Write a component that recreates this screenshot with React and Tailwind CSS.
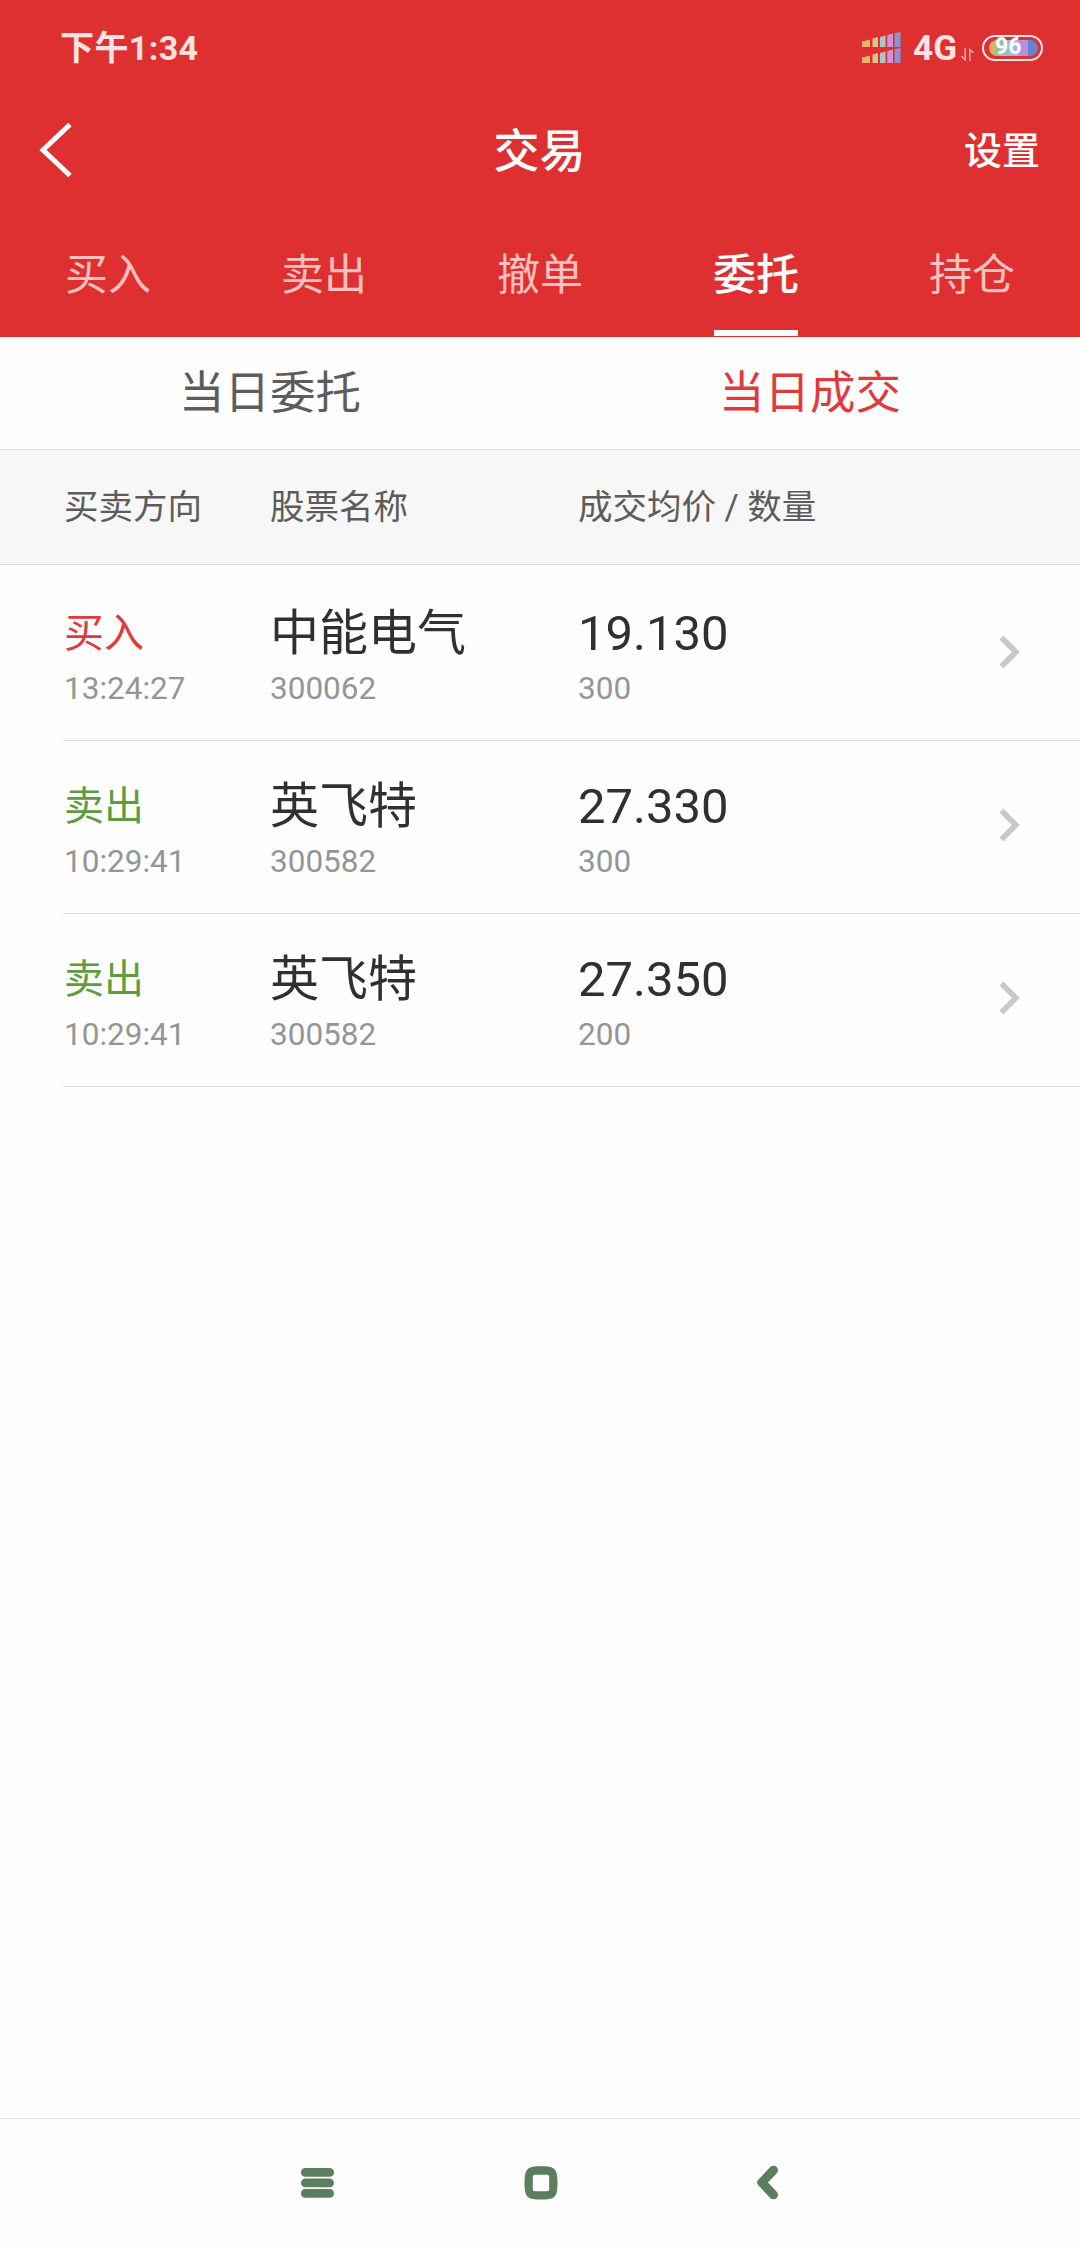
const tabs = ["买入", "卖出", "撤单", "委托", "持仓"];

const deals = [
  { side: "买入", time: "13:24:27", name: "中能电气", code: "300062", price: "19.130", amount: "300" },
  { side: "卖出", time: "10:29:41", name: "英飞特", code: "300582", price: "27.330", amount: "300" },
  { side: "卖出", time: "10:29:41", name: "英飞特", code: "300582", price: "27.350", amount: "200" },
];

function SignalIcon() {
  return (
    <svg width="39" height="32" viewBox="0 0 39 32">
      {[0, 16].map((y) => (
        <g key={y} transform={`translate(0 ${y})`}>
          <path d="M0 9.5L8 7.5V15H0Z" fill="#f3b06a" />
          <path d="M10.5 6.5L16 5V15H10.5Z" fill="#d9c48c" />
          <path d="M18 5L23.5 3.5V15H18Z" fill="#a9c6c4" />
          <path d="M25.2 3L31 1.5V15H25.2Z" fill="#d391dc" />
          <path d="M32.5 1.3L38.5 0V15H32.5Z" fill="#8c93d2" />
        </g>
      ))}
    </svg>
  );
}

function DataArrows() {
  return (
    <svg width="13" height="13" viewBox="0 0 13 13" fill="none" stroke="#f2a3a4" strokeWidth="1.6">
      <path d="M4.2 0V12L0.5 8" />
      <path d="M8.8 13V1.5L12.5 5" />
    </svg>
  );
}

function Battery() {
  return (
    <div className="relative w-[61px] h-[26px] rounded-full border-[2.5px] border-[#ffe6e6] p-[3px] pl-[5px]">
      <div className="flex h-full rounded-full overflow-hidden">
        <div className="w-[6px] bg-[#d6b56a]" />
        <div className="w-[8px] bg-[#98c39b]" />
        <div className="w-[8px] bg-[#8fc4cb]" />
        <div className="w-[8px] bg-[#a9b4dc]" />
        <div className="w-[9px] bg-[#b98fe0]" />
        <div className="flex-1 bg-[#6b83cf]" />
      </div>
      <span className="absolute left-[11px] top-[-2px] text-[23px] leading-[24px] font-bold text-white">96</span>
    </div>
  );
}

function StatusBar() {
  return (
    <div className="h-[96px] shrink-0 pl-[60px] pr-[37px] flex items-center justify-between text-[#ffe3e3]">
      <span className="text-[34px] leading-none font-bold tracking-[0.4px]">下午1:34</span>
      <div className="flex items-center">
        <SignalIcon />
        <span className="ml-[12px] text-[35px] leading-none font-bold">4G</span>
        <div className="ml-[4px] mt-[12px]"><DataArrows /></div>
        <div className="ml-[8px]"><Battery /></div>
      </div>
    </div>
  );
}

function Header() {
  return (
    <header className="bg-[#de3031] text-white h-[337px] flex flex-col">
      <StatusBar />
      <div className="h-[108px] shrink-0 pl-[39px] pr-[40px] grid grid-cols-3 items-center">
        <svg width="34" height="56" viewBox="0 0 34 56" fill="none" stroke="white" strokeWidth="5">
          <path d="M31 2.5L4 28L31 53.5" />
        </svg>
        <h1 className="pt-[2px] text-center text-[46px] leading-none font-medium">交易</h1>
        <span className="pt-[2px] text-right text-[38px] leading-none font-medium">设置</span>
      </div>
      <nav className="h-[133px] shrink-0 grid grid-cols-5">
        {tabs.map((tab) => (
          <div key={tab} className="flex justify-center">
            {tab === "委托" ? (
              <span className="w-[84px] h-[132px] flex justify-center whitespace-nowrap border-b-[6px] border-white text-[43px] leading-[142px] font-medium">{tab}</span>
            ) : (
              <span className="h-[132px] text-[43px] leading-[142px] text-[#ffc0c0]">{tab}</span>
            )}
          </div>
        ))}
      </nav>
    </header>
  );
}

function DealRow({ deal }) {
  return (
    <li className="ml-[63px] h-[173px] border-b border-[#dcdcdc] flex items-start pt-[30px]">
      <div className="w-[207px] pl-px">
        <div className={`text-[40px] leading-[72px] ${deal.side === "买入" ? "text-[#e03a3c]" : "text-[#5f9c3f]"}`}>{deal.side}</div>
        <div className="text-[31.5px] leading-[38px] text-[#959595]">{deal.time}</div>
      </div>
      <div className="w-[308px]">
        <div className="text-[49px] leading-[72px] text-[#303030]">{deal.name}</div>
        <div className="text-[31.5px] leading-[38px] text-[#959595]">{deal.code}</div>
      </div>
      <div className="flex-1">
        <div className="text-[49px] leading-[72px] text-[#303030]">{deal.price}</div>
        <div className="text-[31.5px] leading-[38px] text-[#959595]">{deal.amount}</div>
      </div>
      <svg className="mt-[36.5px] mr-[60px]" width="21" height="34" viewBox="0 0 21 34" fill="none" stroke="#c8c8c8" strokeWidth="5.7">
        <path d="M2.5 2.5L16.8 17L2.5 31.5" />
      </svg>
    </li>
  );
}

function NavBar() {
  return (
    <footer className="h-[130px] pb-[2px] border-t border-[#e4e4e4] flex items-center justify-center text-[#5b7e5e]">
      <svg width="33" height="30" viewBox="0 0 33 30" fill="currentColor">
        <rect y="0" width="33" height="8.8" rx="4.4" />
        <rect y="10.5" width="33" height="8.8" rx="4.4" />
        <rect y="21" width="33" height="8.8" rx="4.4" />
      </svg>
      <svg className="ml-[190px]" width="34" height="34" viewBox="0 0 34 34">
        <path d="M17 0.3C30 0.3 33.5 2 33.5 17S30 33.5 17 33.5S0.5 32 0.5 17S4 0.3 17 0.3Z" fill="currentColor" />
        <rect x="8.8" y="8.8" width="16.4" height="16.4" rx="2" fill="#fefefe" />
      </svg>
      <svg className="ml-[199px]" width="22" height="35" viewBox="0 0 22 35" fill="none" stroke="currentColor" strokeWidth="9" strokeLinecap="round" strokeLinejoin="round">
        <path d="M16.5 5.2L4.8 17.5L16.5 29.8" />
      </svg>
    </footer>
  );
}

export default function App() {
  return (
    <div className="w-[1080px] h-[2248px] bg-[#fefefe] flex flex-col overflow-hidden font-[Roboto,'Noto_Sans_CJK_SC',sans-serif]">
      <Header />
      <div className="h-[112px] grid grid-cols-2 text-center text-[45.5px] leading-[114px]">
        <span className="text-[#5c5c5c]">当日委托</span>
        <span className="text-[#e03a3c]">当日成交</span>
      </div>
      <div className="h-[116px] pl-[64px] flex bg-[#f7f7f7] border-y border-[#dcdcdc] text-[34.5px] leading-[114px] text-[#5c5c5c]">
        <span className="w-[206px]">买卖方向</span>
        <span className="w-[308px]">股票名称</span>
        <span>成交均价 / 数量</span>
      </div>
      <ul className="flex-1 pt-[3px]">
        {deals.map((deal, i) => (
          <DealRow key={i} deal={deal} />
        ))}
      </ul>
      <NavBar />
    </div>
  );
}
